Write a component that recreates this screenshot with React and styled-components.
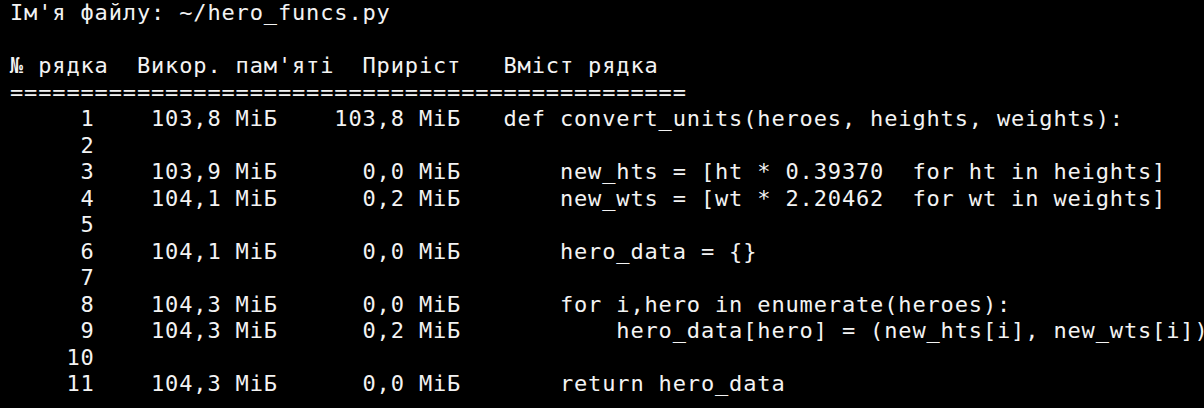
import React from 'react';
import styled, { createGlobalStyle } from 'styled-components';

const CELL = 14.1;
const LINE = 26.5;

const GlobalStyle = createGlobalStyle`
  html, body {
    margin: 0;
    padding: 0;
    background: #000;
  }
  body {
    overflow: hidden;
  }
`;

const Terminal = styled.main`
  box-sizing: border-box;
  width: 1204px;
  height: 408px;
  overflow: hidden;
  padding: 0 0 0 10px;
  background: #000;
  color: #f3f3f3;
  font-family: "DejaVu Sans Mono", "Liberation Mono", monospace;
  font-size: 22px;
  letter-spacing: 0.855px;
  line-height: ${LINE}px;
`;

const Line = styled.div`
  height: ${LINE}px;
  white-space: pre;
`;

const Row = styled.div`
  display: grid;
  grid-template-columns: ${6 * CELL}px ${13 * CELL}px ${13 * CELL}px max-content;
  height: ${LINE}px;
  white-space: pre;
`;

const Num = styled.span`
  text-align: right;
`;

const Code = styled.span`
  padding-left: ${({ $level }) => (3 + 4 * $level) * CELL}px;
`;

const rows = [
  { n: 1, mem: '103,8 МіБ', inc: '103,8 МіБ', level: 0, code: 'def convert_units(heroes, heights, weights):' },
  { n: 2 },
  { n: 3, mem: '103,9 МіБ', inc: '0,0 МіБ', level: 1, code: 'new_hts = [ht * 0.39370  for ht in heights]' },
  { n: 4, mem: '104,1 МіБ', inc: '0,2 МіБ', level: 1, code: 'new_wts = [wt * 2.20462  for wt in weights]' },
  { n: 5 },
  { n: 6, mem: '104,1 МіБ', inc: '0,0 МіБ', level: 1, code: 'hero_data = {}' },
  { n: 7 },
  { n: 8, mem: '104,3 МіБ', inc: '0,0 МіБ', level: 1, code: 'for i,hero in enumerate(heroes):' },
  { n: 9, mem: '104,3 МіБ', inc: '0,2 МіБ', level: 2, code: 'hero_data[hero] = (new_hts[i], new_wts[i])' },
  { n: 10 },
  { n: 11, mem: '104,3 МіБ', inc: '0,0 МіБ', level: 1, code: 'return hero_data' },
];

export default function App() {
  return (
    <>
      <GlobalStyle />
      <Terminal>
        <Line>Ім'я файлу: ~/hero_funcs.py</Line>
        <Line> </Line>
        <Line>№ рядка  Викор. пам'яті  Приріст   Вміст рядка</Line>
        <Line>{'='.repeat(48)}</Line>
        {rows.map((r) => (
          <Row key={r.n}>
            <Num>{r.n}</Num>
            <Num>{r.mem || ''}</Num>
            <Num>{r.inc || ''}</Num>
            <Code $level={r.level || 0}>{r.code || ''}</Code>
          </Row>
        ))}
      </Terminal>
    </>
  );
}
